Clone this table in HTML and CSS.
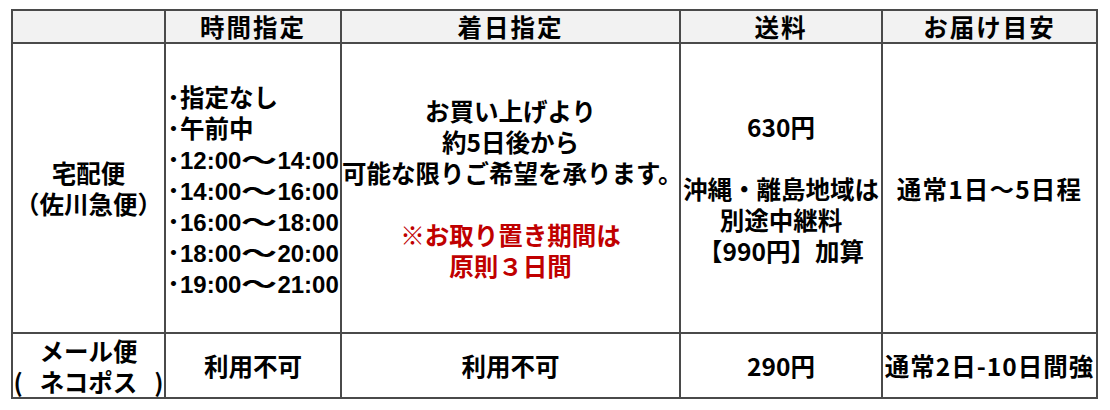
FILE: index.html
```html
<!DOCTYPE html>
<html lang="ja">
<head>
<meta charset="utf-8">
<link rel="stylesheet" href="styles.css">
</head>
<body>
<table class="ship">
  <colgroup>
    <col class="c1"><col class="c2"><col class="c3"><col class="c4"><col class="c5">
  </colgroup>
  <thead>
    <tr class="head">
      <th></th>
      <th>時間指定</th>
      <th>着日指定</th>
      <th>送料</th>
      <th>お届け目安</th>
    </tr>
  </thead>
  <tbody>
    <tr class="main">
      <td>宅配便<br>（佐川急便）</td>
      <td class="times">
        <div class="tl"><span class="dot">･</span><span class="jp">指定なし</span></div>
        <div class="tl"><span class="dot">･</span><span class="jp">午前中</span></div>
        <div class="tl"><span class="dot">･</span>12:00<span class="wave">～</span>14:00</div>
        <div class="tl"><span class="dot">･</span>14:00<span class="wave">～</span>16:00</div>
        <div class="tl"><span class="dot">･</span>16:00<span class="wave">～</span>18:00</div>
        <div class="tl"><span class="dot">･</span>18:00<span class="wave">～</span>20:00</div>
        <div class="tl"><span class="dot">･</span>19:00<span class="wave">～</span>21:00</div>
      </td>
      <td>お買い上げより<br>約5日後から<br>可能な限りご希望を承ります。<br><br><span class="red">※お取り置き期間は<br>原則３日間</span></td>
      <td>630円<br><br>沖縄・離島地域は<br>別途中継料<br>【990円】加算</td>
      <td class="wide">通常1日～5日程</td>
    </tr>
    <tr class="mail">
      <td>メール便<br>(<span class="gap"></span>ネコポス<span class="gap"></span>)</td>
      <td>利用不可</td>
      <td>利用不可</td>
      <td>290円</td>
      <td class="wide2">通常2日-10日間強</td>
    </tr>
  </tbody>
</table>
</body>
</html>
```
FILE: styles.css
```css
html, body {
  margin: 0;
  padding: 0;
  background: #ffffff;
}
body {
  padding: 9px 0 0 11px;
}
.ship {
  border-collapse: collapse;
  table-layout: fixed;
  width: 1085px;
  font-family: "Noto Sans CJK JP", sans-serif;
  font-weight: 700;
  font-size: 24.5px;
  line-height: 31px;
  color: #000000;
}
.c1 { width: 153px; }
.c2 { width: 176px; }
.c3 { width: 339px; }
.c4 { width: 202px; }
.c5 { width: 215px; }
.ship th,
.ship td {
  border: 2px solid #4a4a4a;
  padding: 0;
  text-align: center;
  vertical-align: middle;
  overflow: visible;
  white-space: nowrap;
}
.head th {
  background: #f2f2f2;
  height: 31px;
  letter-spacing: 2px;
  font-weight: 700;
}
.main td {
  height: 288px;
}
.mail td {
  height: 63px;
}
.ship td.times {
  text-align: left;
  padding-left: 1px;
  font-family: "Liberation Sans", "Noto Sans CJK JP", sans-serif;
  font-size: 24px;
}
.tl {
  height: 31px;
  line-height: 31px;
}
.dot {
  font-family: "Noto Sans CJK JP", sans-serif;
  font-size: 26px;
}
.jp {
  font-family: "Noto Sans CJK JP", sans-serif;
  font-size: 24.5px;
}
.wave {
  display: inline-block;
  font-family: "Noto Sans CJK JP", sans-serif;
  transform: scaleX(1.5);
  margin: 0 6px;
}
.red {
  color: #c00000;
}
.gap {
  display: inline-block;
  width: 17px;
}
.wide {
  letter-spacing: 1.2px;
}
.wide2 {
  letter-spacing: 1px;
}
```
